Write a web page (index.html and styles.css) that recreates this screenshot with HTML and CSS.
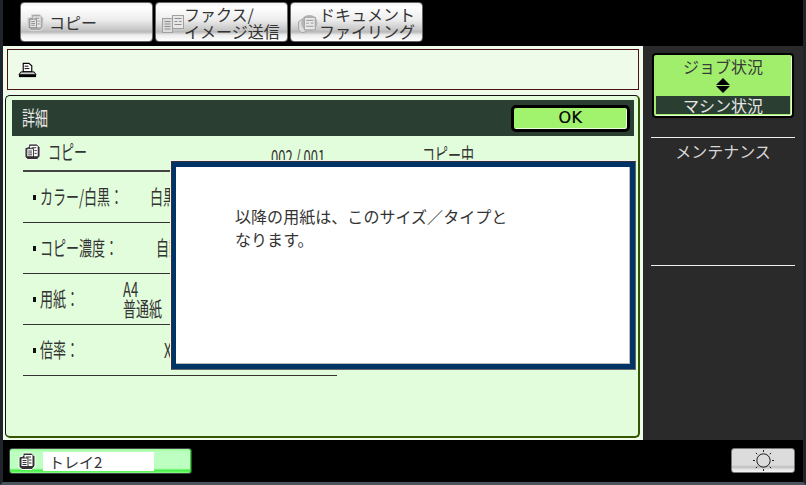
FILE: index.html
```html
<!DOCTYPE html>
<html lang="ja">
<head>
<meta charset="utf-8">
<title>詳細</title>
<link rel="stylesheet" href="styles.css">
</head>
<body>
<svg class="defs" width="0" height="0" aria-hidden="true">
  <defs>
    <symbol id="copy" viewBox="0 0 18 18">
      <path d="M5 1h8.500L17 4.500V14l-3 3.500H4L1 15V5l4-1z" fill="#333" stroke="#fff"/>
      <rect x="6.500" y="3" width="8" height="11" fill="#fff"/>
      <rect x="3" y="6" width="7" height="8.500" fill="#fff" stroke="#333"/>
      <path d="M4.500 8.500h4M4.500 10.500h4M4.500 12.500h4M8 5h5M11 8h2.500M11 11h2.500" stroke="#333" fill="none"/>
    </symbol>
    <symbol id="copy-gray" viewBox="0 0 18 19">
      <path d="M5 1h8.500L17 4.500V15l-3 3H4l-3-2.500V5l4-1z" fill="#a8a8a8" stroke="#d8d8d8" stroke-width="1.200"/>
      <rect x="6.500" y="3" width="8" height="11.500" fill="#e8e8e8"/>
      <rect x="3" y="6" width="7" height="9" fill="#e8e8e8" stroke="#8e8e8e"/>
      <path d="M4.500 8.500h4M4.500 10.500h4M4.500 12.500h4M8 5h5M11 8h2.500M11 11h2.500" stroke="#8e8e8e" fill="none"/>
    </symbol>
    <symbol id="fax-gray" viewBox="0 0 22 18">
      <rect x="0.500" y="3.500" width="10" height="14" fill="#dcdcdc" stroke="#a0a0a0"/>
      <rect x="10.500" y="0.500" width="11" height="13" fill="#e8e8e8" stroke="#a0a0a0"/>
      <path d="M2.500 6.500h6M2.500 9h6M2.500 11.500h6M2.500 14h6M12.500 3.500h7M12.500 6.500h3M17 6.500h2.500M12.500 9.500h7" stroke="#8e8e8e" fill="none"/>
    </symbol>
    <symbol id="doc-gray" viewBox="0 0 23 20">
      <path d="M1 7.500l4-3h5v13l-3 2H4l-3-3z" fill="#dcdcdc" stroke="#a0a0a0"/>
      <circle cx="13" cy="9" r="9" fill="#b4b4b4"/>
      <rect x="7.500" y="2.500" width="12" height="14" fill="#e8e8e8" stroke="#a0a0a0"/>
      <path d="M9.500 6h8M9.500 9h3M14.500 9h3M9.500 12.500h8" stroke="#8e8e8e" fill="none"/>
    </symbol>
  </defs>
</svg>
<div class="screen">
  <nav class="tabs">
    <div class="tab">
      <svg class="tab-icon"><use href="#copy-gray"/></svg>
      <span class="tab-label">コピー</span>
    </div>
    <div class="tab">
      <svg class="tab-icon tab-icon-wide"><use href="#fax-gray"/></svg>
      <span class="tab-label tab-label-two">ファクス/<br>イメージ送信</span>
    </div>
    <div class="tab">
      <svg class="tab-icon tab-icon-wide"><use href="#doc-gray"/></svg>
      <span class="tab-label tab-label-two">ドキュメント<br>ファイリング</span>
    </div>
  </nav>

  <div class="body-row">
    <main class="main">
      <div class="notice">
        <svg class="printer" viewBox="0 0 20 16" aria-hidden="true">
          <path d="M5.500 1h6l3 2.500V10h-9z" fill="#fff" stroke="#000" stroke-width="1.200"/>
          <path d="M7 4h4M7 6.500h5" stroke="#000"/>
          <path d="M3 10h14l2 3H1z" fill="#ccc" stroke="#000"/>
          <rect x="1" y="13" width="18" height="2.500" fill="#000"/>
        </svg>
      </div>
      <section class="panel">
        <header class="panel-head">
          <span class="squeeze head-title">詳細</span>
          <button class="ok">OK</button>
        </header>
        <div class="job">
          <svg class="job-icon"><use href="#copy"/></svg>
          <span class="squeeze job-name">コピー</span>
          <span class="squeeze job-count">002 / 001</span>
          <span class="squeeze job-state">コピー中</span>
        </div>
        <div class="row">
          <span class="row-label"><i class="bullet"></i><span class="squeeze">カラー/白黒：</span></span>
          <span class="squeeze row-value">白黒</span>
        </div>
        <div class="row">
          <span class="row-label"><i class="bullet"></i><span class="squeeze">コピー濃度：</span></span>
          <span class="squeeze row-value row-value-auto">自動</span>
        </div>
        <div class="row">
          <span class="row-label"><i class="bullet"></i><span class="squeeze">用紙：</span></span>
          <span class="squeeze row-value row-value-paper">A4<br>普通紙</span>
        </div>
        <div class="row">
          <span class="row-label"><i class="bullet"></i><span class="squeeze">倍率：</span></span>
          <span class="squeeze row-value row-value-zoom">X1.00</span>
        </div>
      </section>
      <div class="dialog">
        <div class="dialog-inner">
          <p class="dialog-text">以降の用紙は、このサイズ／タイプと<br>なります。</p>
        </div>
      </div>
    </main>

    <aside class="side">
      <div class="status-btn">
        <span class="status-top">ジョブ状況</span>
        <span class="arrows"><i class="arrow-up"></i><i class="arrow-down"></i></span>
        <span class="status-bottom">マシン状況</span>
      </div>
      <div class="maint">メンテナンス</div>
    </aside>
  </div>

  <footer class="bottom">
    <div class="tray">
      <svg class="tray-icon"><use href="#copy"/></svg>
      <span class="tray-field">トレイ2</span>
    </div>
    <button class="sun-btn" aria-label="節電">
      <svg class="sun" viewBox="0 0 22 22" aria-hidden="true">
        <circle cx="11" cy="11" r="7" fill="none" stroke="#111"/>
        <path d="M11 0v2M11 20v2M0 11h2M20 11h2M3 3l1.500 1.500M19 3l-1.500 1.500M3 19l1.500-1.500M19 19l-1.500-1.500" stroke="#111" fill="none"/>
      </svg>
    </button>
  </footer>
</div>
</body>
</html>
```
FILE: styles.css
```css
* { box-sizing: border-box; }
html, body { margin: 0; padding: 0; background: #000; }
.defs { position: absolute; }
body, button { font-family: "Noto Sans CJK JP", "Liberation Sans", sans-serif; }

.screen {
  width: 806px;
  height: 485px;
  display: flex;
  flex-direction: column;
  background: #000;
  border-left: 3px solid #20252c;
  border-right: 3px solid #20252c;
  border-bottom: 3px solid #4d535c;
  overflow: hidden;
}

/* tabs */
.tabs { height: 46px; flex: none; display: flex; gap: 2px; padding: 2px 0 4px 17px; }
.tab {
  width: 133px;
  height: 40px;
  display: flex;
  align-items: center;
  border: 1px solid #666;
  border-radius: 4px;
  background: linear-gradient(#f4f4f4 0%, #fefefe 12%, #ececec 45%, #c4c4c4 72%, #b8b8b8 76%, #ececec 84%, #fff 100%);
  color: #333;
  font-size: 16px;
  padding-left: 6px;
}
.tab-icon { width: 17px; height: 19px; flex: none; margin-right: 5px; }
.tab-icon-wide { width: 22px; height: 18px; margin: 3px 0 0 0; }
.tab-label { white-space: nowrap; line-height: 17px; }
.tab-label-two { padding-top: 1px; }

/* layout */
.body-row { height: 394px; flex: none; display: flex; }
.main { position: relative; width: 640px; flex: none; background: #effcea; padding: 3px 3px 0 2px; }
.side { width: 160px; flex: none; background: #2a2a2a; padding: 7px 8px 0 6px; }

.notice {
  height: 41px;
  margin: 0 1px 0 2px;
  border: 1px solid #4a1212;
  background: #effbe9;
  display: flex;
  align-items: center;
  padding-left: 10px;
}
.printer { width: 19px; height: 16px; }

.panel {
  height: 343px;
  margin-top: 5px;
  background: #e2fddb;
  border: 1px solid #111;
  border-right: 2px solid #355500;
  border-bottom: 2px solid #355500;
  border-radius: 5px;
  padding: 4px 4px 0 6px;
}
.panel-head {
  height: 36px;
  background: #2a3f32;
  display: flex;
  align-items: center;
  justify-content: space-between;
  padding: 0 4px 0 10px;
}
.squeeze { display: inline-block; transform: scaleX(.65); transform-origin: left center; white-space: nowrap; }
.head-title { color: #e6e6e6; font-size: 20px; width: 26px; line-height: 24px; }
.ok {
  width: 119px;
  height: 27px;
  padding: 0;
  border: 3px solid #000;
  border-radius: 5px;
  background: #a1f26d;
  box-shadow: inset -1px -1px 0 #e8ffd8;
  color: #000;
  font: 400 16px/20px "DejaVu Sans", sans-serif;
  letter-spacing: 0.5px;
  -webkit-text-stroke: .2px #000;
}

.job {
  width: 314px;
  height: 36px;
  margin-left: 11px;
  border-bottom: 2px solid #444;
  display: flex;
  align-items: center;
  color: #333;
  font-size: 20px;
  position: relative;
}
.job-icon { width: 17px; height: 17px; margin: 0 0 3px 1px; }
.job-name { margin: 0 0 3px 7px; line-height: 24px; }
.job-count { position: absolute; left: 248px; top: 11px; line-height: 20px; }
.job-state { position: absolute; left: 399px; top: 9px; line-height: 20px; }

.row {
  width: 314px;
  height: 51px;
  margin-left: 11px;
  border-bottom: 1px solid #333;
  display: flex;
  align-items: center;
  color: #333;
  font-size: 20px;
}
.row-label { width: 127px; flex: none; display: flex; align-items: center; padding-left: 10px; line-height: 24px; }
.bullet { width: 3px; height: 5px; background: #111; margin-right: 4px; flex: none; }
.row-value { line-height: 22px; }
.row-value-auto { margin-left: 6px; }
.row-value-paper { margin-left: -27px; line-height: 20px; }
.row-value-zoom { margin-left: 14px; }

.dialog {
  position: absolute;
  left: 168px;
  top: 115px;
  width: 465px;
  height: 209px;
  border: 1px solid #333;
  border-right-color: #666;
  border-bottom-color: #666;
  box-shadow: -1px -1px 0 #f4f4f4;
  background: #003366;
}
.dialog-inner {
  height: 100%;
  background: #fff;
  border-style: solid;
  border-color: #003366;
  border-width: 5px 5px 5px 4px;
  box-shadow: inset -1px -1px 0 #bbb;
  padding: 38px 0 0 59px;
}
.dialog-text { margin: 0; color: #333; font-size: 16px; line-height: 23px; white-space: nowrap; letter-spacing: .05px; }

/* side */
.status-btn {
  width: 142px;
  height: 65px;
  margin-left: 3px;
  display: flex;
  flex-direction: column;
  align-items: center;
  background: #a0ee6b;
  border: 2px solid #000;
  border-radius: 4px;
  box-shadow: inset -1px -1px 0 #e8ffd8;
  padding: 0 2px;
}
.status-top { color: #3a3a3a; font-size: 16px; height: 23px; line-height: 22px; }
.arrows { display: flex; flex-direction: column; gap: 1px; height: 18px; }
.arrow-up, .arrow-down { display: block; width: 0; height: 0; border-left: 7px solid transparent; border-right: 7px solid transparent; }
.arrow-up { border-bottom: 7px solid #000; }
.arrow-down { border-top: 7px solid #000; }
.status-bottom { align-self: stretch; background: #2a3f32; color: #e6e6e6; text-align: center; font-size: 16px; line-height: 18px; height: 18px; }

.maint {
  margin: 19px 0 0 2px;
  width: 144px;
  height: 129px;
  border-top: 1px solid #eee;
  border-bottom: 1px solid #eee;
  color: #d8d8d8;
  font-size: 16px;
  line-height: 27px;
  text-align: center;
}

/* bottom bar */
.bottom { height: 42px; flex: none; display: flex; align-items: flex-start; justify-content: space-between; padding: 8px 8px 0 6px; }
.tray {
  width: 183px;
  height: 26px;
  display: flex;
  align-items: center;
  border: 1px solid #444;
  border-radius: 3px;
  padding-left: 8px;
  background: linear-gradient(#99ff99 0, #bcffc0 12%, #bcffc0 80%, #44ee44 90%, #88ff88 100%);
  box-shadow: inset -1px 0 0 #22dd22;
}
.tray-icon { width: 18px; height: 18px; flex: none; }
.tray-field { width: 111px; height: 19px; margin-left: 7px; background: #fff; color: #333; font-size: 15px; line-height: 19px; padding-left: 6px; }
.sun-btn {
  width: 64px;
  height: 25px;
  padding: 0;
  display: flex;
  align-items: center;
  justify-content: center;
  border: 1px solid #777;
  border-radius: 3px;
  background: linear-gradient(#dcdcdc 0, #dcdcdc 70%, #bdbdbd 78%, #e8e8e8 90%, #f4f4f4 100%);
}
.sun { width: 21px; height: 21px; }
```
